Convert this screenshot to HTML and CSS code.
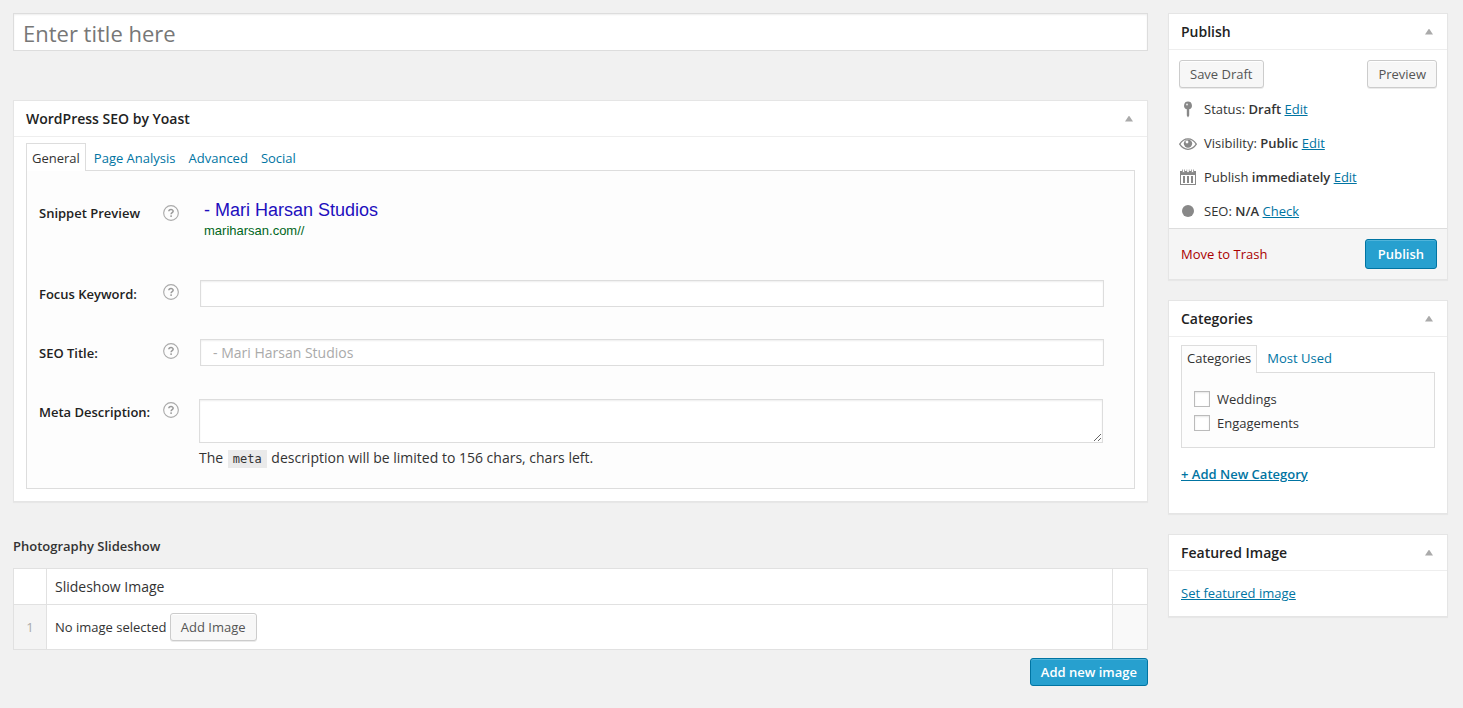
FILE: index.html
```
<!DOCTYPE html>
<html lang="en">
<head>
<meta charset="utf-8">
<title>Add New Slideshow</title>
<link rel="stylesheet" href="styles.css">
</head>
<body>
<div class="editor">
  <main class="main">
    <input class="title-input" type="text" aria-label="Title" placeholder="Enter title here">

    <section class="box seo-box">
      <header class="box-header"><h2>WordPress SEO by Yoast</h2><button class="toggle" type="button" aria-label="Toggle SEO panel"></button></header>
      <div class="box-body">
        <nav class="tabs seo-tabs">
          <a class="tab active" href="#general">General</a>
          <a class="tab" href="#analysis">Page Analysis</a>
          <a class="tab" href="#advanced">Advanced</a>
          <a class="tab" href="#social">Social</a>
        </nav>
        <div class="panel seo-panel">
          <div class="field snippet">
            <span class="label">Snippet Preview</span>
            <svg class="help" viewBox="0 0 17 17"><use href="#help"/></svg>
            <div class="snippet-text">
              <a class="snippet-title" href="#preview">- Mari Harsan Studios</a>
              <span class="snippet-url">mariharsan.com//</span>
            </div>
          </div>
          <div class="field">
            <label class="label" for="keyword">Focus Keyword:</label>
            <svg class="help" viewBox="0 0 17 17"><use href="#help"/></svg>
            <input class="text-input" id="keyword" type="text">
          </div>
          <div class="field">
            <label class="label" for="seo-title">SEO Title:</label>
            <svg class="help" viewBox="0 0 17 17"><use href="#help"/></svg>
            <input class="text-input seo-title" id="seo-title" type="text" placeholder="- Mari Harsan Studios">
          </div>
          <div class="field">
            <label class="label" for="meta-desc">Meta Description:</label>
            <svg class="help" viewBox="0 0 17 17"><use href="#help"/></svg>
            <div class="meta">
              <textarea class="text-input meta-text" id="meta-desc"></textarea>
              <p class="meta-note">The <code>meta</code> description will be limited to 156 chars, chars left.</p>
            </div>
          </div>
        </div>
      </div>
    </section>

    <section class="slideshow">
      <h2 class="slideshow-heading">Photography Slideshow</h2>
      <table class="slides">
        <thead><tr><td class="order"></td><th scope="col">Slideshow Image</th><td class="remove"></td></tr></thead>
        <tbody><tr>
          <td class="order">1</td>
          <td class="image">No image selected <button class="button" type="button">Add Image</button></td>
          <td class="remove"></td>
        </tr></tbody>
      </table>
      <div class="slideshow-actions"><button class="button primary" type="button">Add new image</button></div>
    </section>
  </main>

  <aside class="side">
    <section class="box">
      <header class="box-header"><h2>Publish</h2><button class="toggle" type="button" aria-label="Toggle Publish panel"></button></header>
      <div class="draft-actions">
        <button class="button" type="button">Save Draft</button>
        <button class="button" type="button">Preview</button>
      </div>
      <ul class="status-list">
        <li>
          <svg class="status-icon" viewBox="0 0 18 18"><path d="M9 1.500a4 4 0 0 0-1.200 7.800V15.500L9 17.500l1.200-2V9.300A4 4 0 0 0 9 1.500z" fill="#888"/><circle cx="8" cy="4.500" r="1.100" fill="#ddd"/></svg>
          <span>Status: <b>Draft</b> <a href="#status">Edit</a></span>
        </li>
        <li>
          <svg class="status-icon" viewBox="0 0 18 18"><path d="M.7 10.200C5 3.200 13 3.200 17.300 10.200 13 17 5 17 .7 10.200z" fill="#fff" stroke="#888" stroke-width="1.300"/><circle cx="9" cy="9.600" r="4.200" fill="#888"/><circle cx="8" cy="8" r="1.400" fill="#fff"/></svg>
          <span>Visibility: <b>Public</b> <a href="#visibility">Edit</a></span>
        </li>
        <li>
          <svg class="status-icon" viewBox="0 0 18 18"><path d="M1 3h16v14H1zM2 7v9h14V7z" fill="#888" fill-rule="evenodd"/><path d="M4 8h2v7H4zM8 8h2v7H8zM12 8h2v7h-2z" fill="#888"/><path d="M3.500 1.500v3h2v-3M8 1.500v3h2v-3M12.500 1.500v3h2v-3" fill="#fff" stroke="#888" stroke-width=".8"/><path d="M3.900 1h1.200v3H3.900zM8.400 1h1.200v3H8.400zM12.900 1h1.200v3h-1.200z" fill="#fff"/></svg>
          <span>Publish <b>immediately</b> <a href="#date">Edit</a></span>
        </li>
        <li>
          <svg class="status-icon" viewBox="0 0 18 18"><circle cx="9" cy="9" r="6" fill="#888"/></svg>
          <span>SEO: <b>N/A</b> <a href="#seo">Check</a></span>
        </li>
      </ul>
      <footer class="publish-footer">
        <a class="trash" href="#trash">Move to Trash</a>
        <button class="button primary large" type="button">Publish</button>
      </footer>
    </section>

    <section class="box">
      <header class="box-header"><h2>Categories</h2><button class="toggle" type="button" aria-label="Toggle Categories panel"></button></header>
      <div class="categories-body">
        <nav class="tabs category-tabs">
          <a class="tab active" href="#all">Categories</a>
          <a class="tab" href="#used">Most Used</a>
        </nav>
        <div class="panel category-panel">
          <label class="check"><input type="checkbox">Weddings</label>
          <label class="check"><input type="checkbox">Engagements</label>
        </div>
        <a class="add-category" href="#add">+ Add New Category</a>
      </div>
    </section>

    <section class="box">
      <header class="box-header"><h2>Featured Image</h2><button class="toggle" type="button" aria-label="Toggle Featured Image panel"></button></header>
      <div class="featured-body"><a href="#featured">Set featured image</a></div>
    </section>
  </aside>
</div>
<svg class="symbols" aria-hidden="true">
  <symbol id="help" viewBox="0 0 17 17"><circle cx="8.500" cy="8.500" r="7.800" fill="none" stroke="#aaa" stroke-width="1.200"/><path d="M6.200 6.700C6.300 4.300 10.800 4.200 10.800 6.700c0 1.500-2.200 1.300-2.200 3" fill="none" stroke="#999" stroke-width="1.600"/><circle cx="8.600" cy="11.800" r="1" fill="#999"/></symbol>
</svg>
</body>
</html>
```
FILE: styles.css
```
* { box-sizing: border-box; }
body {
  margin: 0;
  background: #f1f1f1;
  color: #333;
  font: 13px/20px "Open Sans", sans-serif;
}
h2, p, ul { margin: 0; padding: 0; }
a { color: #0074a2; }
b { font-weight: 600; }
input, textarea, button { font-family: inherit; }
.symbols { position: absolute; width: 0; height: 0; }

.editor {
  display: grid;
  grid-template-columns: minmax(0, 1fr) 280px;
  gap: 20px;
  padding: 13px 15px 20px 13px;
  align-items: start;
}
.side { display: grid; gap: 20px; }

.title-input {
  display: block;
  width: 100%;
  height: 38px;
  margin-bottom: 49px;
  padding: 4px 9px 2px;
  border: 1px solid #ddd;
  background: #fff;
  box-shadow: inset 0 1px 2px rgba(0, 0, 0, .07);
  font-size: 22px;
}
.title-input::placeholder { color: #777; }

.box {
  border: 1px solid #e5e5e5;
  background: #fff;
  box-shadow: 0 1px 1px rgba(0, 0, 0, .04);
}
.box-header {
  display: flex;
  align-items: center;
  justify-content: space-between;
  height: 36px;
  padding: 0 14px 0 12px;
  border-bottom: 1px solid #eee;
}
.box-header h2 { color: #222; font-size: 14px; font-weight: 600; }
.toggle {
  width: 8px;
  height: 6px;
  padding: 0;
  border: 0;
  background: #aaa;
  clip-path: polygon(50% 0, 100% 100%, 0 100%);
}
.box-body { padding: 6px 12px 12px; }

.tabs { display: flex; }
.tab {
  height: 27px;
  padding: 0 4px;
  border: 1px solid transparent;
  border-bottom: 0;
  text-decoration: none;
}
.tab.active {
  z-index: 1;
  height: 28px;
  margin-bottom: -1px;
  padding: 0 5px;
  border-color: #ddd;
  background: #fdfdfd;
  color: #333;
}
.seo-tabs { gap: 3px; }
.seo-tabs .tab { padding-top: 4px; }
.seo-tabs .tab.active { background: #fff; }
.panel { border: 1px solid #ddd; background: #fdfdfd; }

.seo-panel {
  display: grid;
  gap: 32px;
  padding: 29px 30px 20px 12px;
}
.field {
  display: grid;
  grid-template-columns: 124px 16px minmax(0, 1fr);
  align-items: start;
}
.label { padding-top: 4px; color: #222; font-weight: 600; }
.help { width: 16px; height: 16px; margin-top: 4px; }
.snippet { height: 48px; }
.snippet .label { padding-top: 3px; }
.snippet .help { margin-top: 5px; }
.snippet-text {
  display: grid;
  grid-template-rows: 21px 20px;
  padding-left: 25px;
  font-family: "Liberation Sans", Arial, sans-serif;
}
.snippet-title { color: #1e0fbe; font-size: 18px; text-decoration: none; }
.snippet-url { color: #006621; }
.text-input {
  height: 27px;
  margin-left: 21px;
  padding: 3px 12px;
  border: 1px solid #ddd;
  background: #fff;
  box-shadow: inset 0 1px 2px rgba(0, 0, 0, .07);
  font-size: 14px;
}
.text-input::placeholder { color: #aaa; }
.meta { padding: 1px 1px 0 20px; }
.meta-text { display: block; width: 100%; height: 44px; margin: 0 0 5px; }
.meta-note { font-size: 14px; }
.meta-note code {
  margin: 0 1px;
  padding: 2px 5px;
  background: #eaeaea;
  font: 12px "DejaVu Sans Mono", monospace;
}

.slideshow { padding-top: 34px; }
.slideshow-heading { margin-bottom: 12px; font-size: 13px; font-weight: 600; }
.slides {
  width: 100%;
  border-collapse: collapse;
  border: 1px solid #e1e1e1;
  background: #fff;
}
.slides td, .slides th { padding: 8px; border: 1px solid #e1e1e1; text-align: left; }
.slides th { height: 36px; padding: 7px 8px; font-size: 14px; font-weight: 400; }
.slides .order { width: 33px; padding: 0; text-align: center; color: #aaa; }
.slides .remove { width: 35px; padding: 0; }
.slides tbody .order { background: #f4f4f4; }
.slides tbody .remove { background: #f9f9f9; }
.slideshow-actions { display: flex; justify-content: flex-end; padding-top: 8px; }

.button {
  height: 28px;
  padding: 0 10px;
  border: 1px solid #ccc;
  border-radius: 3px;
  background: #f7f7f7;
  box-shadow: inset 0 1px 0 #fff, 0 1px 0 rgba(0, 0, 0, .08);
  color: #555;
  font-size: 13px;
  line-height: 26px;
}
.button.primary {
  border-color: #0074a2;
  background: #27a0cf;
  box-shadow: inset 0 1px 0 rgba(120, 200, 230, .5);
  color: #fff;
  font-weight: 600;
}
.button.large { height: 30px; padding: 0 12px; line-height: 28px; }

.draft-actions { display: flex; justify-content: space-between; padding: 10px 10px 4px; }
.status-list { list-style: none; padding: 0 10px; }
.status-list li { display: flex; align-items: center; gap: 7px; height: 34px; }
.status-icon { width: 18px; height: 18px; }
.publish-footer {
  display: flex;
  align-items: center;
  justify-content: space-between;
  padding: 10px 10px 10px 12px;
  border-top: 1px solid #ddd;
  background: #f5f5f5;
}
.trash { color: #a00; text-decoration: none; }

.categories-body { padding: 8px 12px 29px; }
.category-tabs { gap: 5px; }
.category-tabs .tab { padding-top: 2px; }
.category-panel { display: grid; gap: 4px; padding: 16px 12px 14px; }
.check { display: flex; align-items: center; gap: 7px; }
.check input {
  width: 16px;
  height: 16px;
  margin: 0;
  appearance: none;
  border: 1px solid #bbb;
  background: #fff;
  box-shadow: inset 0 1px 2px rgba(0, 0, 0, .1);
}
.add-category { display: block; margin-top: 16px; font-weight: 600; }
.featured-body { padding: 12px 12px 13px; }
```
